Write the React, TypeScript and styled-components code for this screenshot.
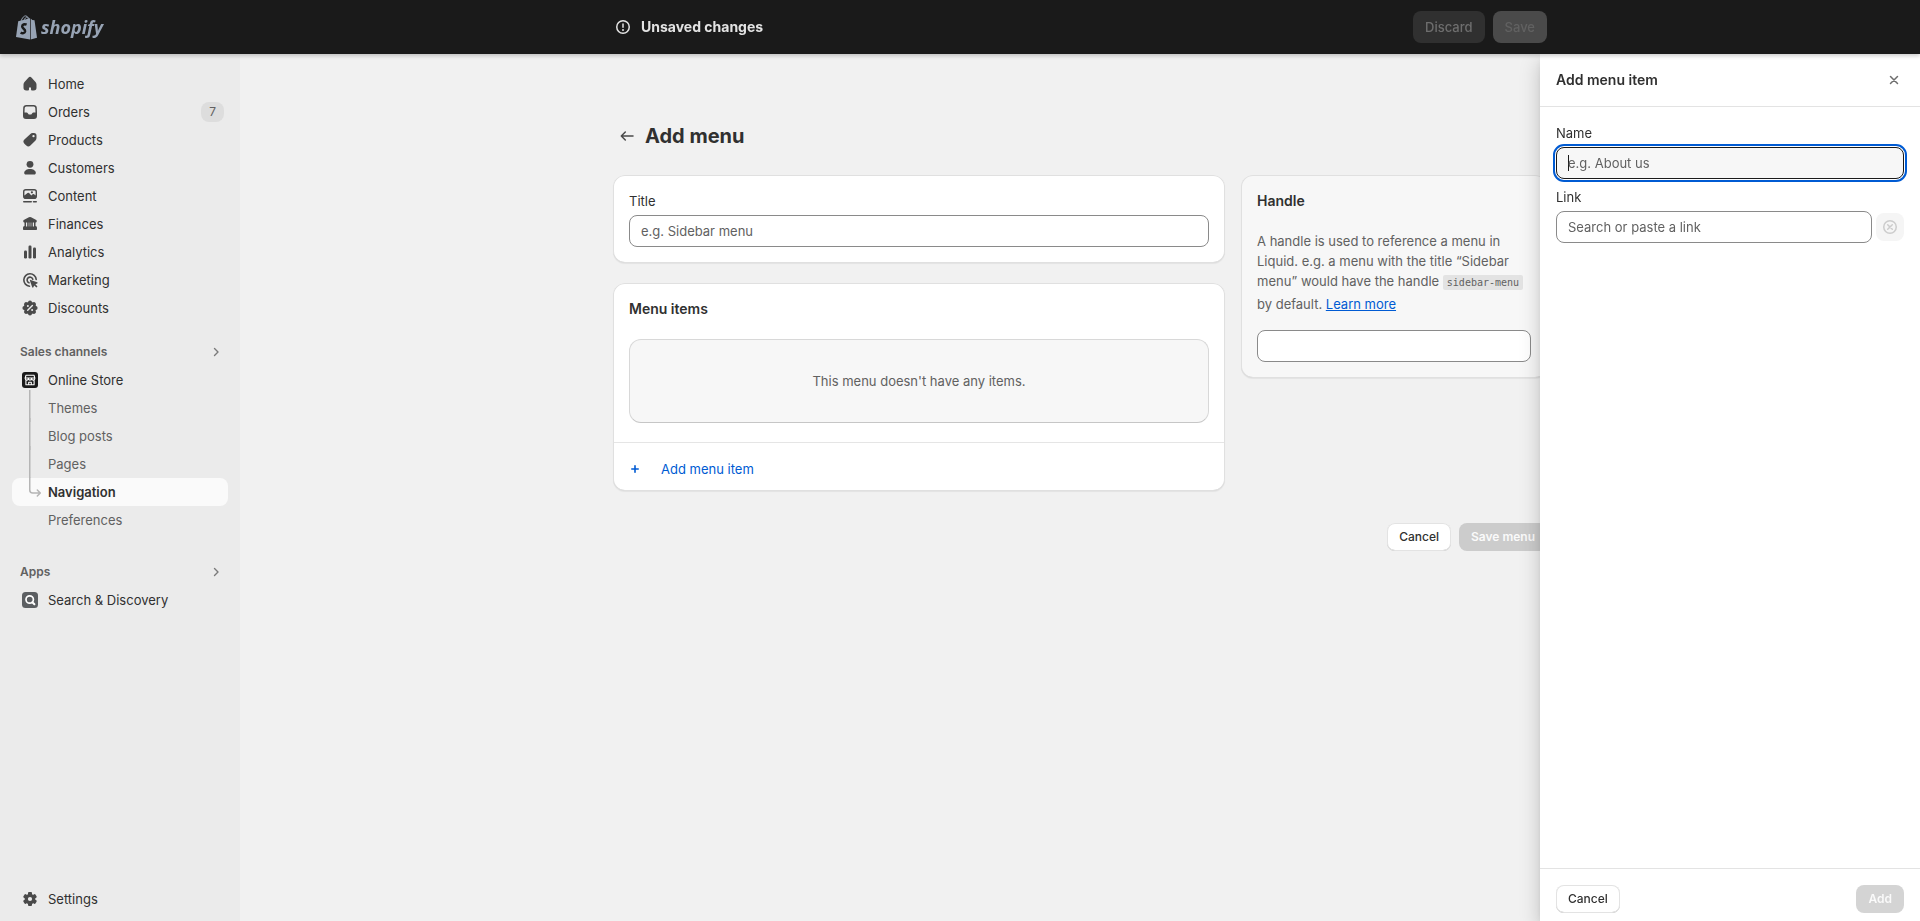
import React from 'react';
import styled, { createGlobalStyle, css } from 'styled-components';

const GlobalStyle = createGlobalStyle`
  *, *::before, *::after { box-sizing: border-box; }
  body {
    margin: 0;
    background: #f1f1f1;
    color: #303030;
    font-family: Inter, 'Liberation Sans', sans-serif;
    font-size: 13px;
    font-weight: 400;
    line-height: 20px;
  }
  h1, h2, p, ul { margin: 0; padding: 0; }
  ul { list-style: none; }
  button, input { font: inherit; color: inherit; }
`;

const Shell = styled.div`
  display: flex;
  flex-direction: column;
  min-height: 100vh;
`;

const TopBar = styled.header`
  position: sticky;
  top: 0;
  z-index: 3;
  display: flex;
  align-items: center;
  height: 54px;
  background: #1a1a1a;
  box-shadow: 0 2px 4px rgba(0, 0, 0, 0.2);
`;

const Brand = styled.a`
  display: flex;
  flex: none;
  align-items: center;
  gap: 4px;
  width: 240px;
  padding-left: 16px;
  color: #97a3b4;
  font: italic 700 18px/24px 'Open Sans', sans-serif;
  text-decoration: none;
`;

const BarContent = styled.div`
  flex: 1;
  display: flex;
  justify-content: center;
`;

const SaveBar = styled.div`
  display: flex;
  align-items: center;
  gap: 8px;
  width: 934px;
  color: #e3e3e3;
`;

const SaveMessage = styled.p`
  display: flex;
  flex: 1;
  align-items: center;
  gap: 8px;
  font-size: 14px;
  font-weight: 700;
`;

const BarButton = styled.button<{ $strong?: boolean }>`
  height: 32px;
  padding: 0 12px;
  border: 0;
  border-radius: 8px;
  background: ${(p) => (p.$strong ? '#4a4a4a' : '#303030')};
  color: ${(p) => (p.$strong ? '#616161' : '#6e6e6e')};
  font-weight: 500;
`;

const Body = styled.div`
  display: flex;
  flex: 1;
`;

const Sidebar = styled.nav`
  display: flex;
  flex: none;
  flex-direction: column;
  width: 240px;
  padding: 16px 12px 8px;
  background: #ebebeb;
`;

const NavLink = styled.a<{ $sub?: boolean; $current?: boolean }>`
  display: flex;
  align-items: center;
  gap: 8px;
  height: 28px;
  padding: 0 4px 0 8px;
  border-radius: 8px;
  text-decoration: none;
  color: ${(p) => (p.$sub && !p.$current ? '#616161' : '#303030')};
  ${(p) => p.$current && css`
    background: #fafafa;
    font-weight: 600;
  `}
`;

const NavText = styled.span`
  flex: 1;
`;

const IconSlot = styled.svg`
  flex: none;
  display: block;
  overflow: visible;
`;

const Badge = styled.span`
  padding: 0 8px;
  border-radius: 8px;
  background: #dddddd;
  color: #616161;
  font-size: 12px;
`;

const NavHeading = styled.button`
  display: flex;
  align-items: center;
  justify-content: space-between;
  width: 100%;
  height: 28px;
  margin-top: 16px;
  padding: 0 2px 0 8px;
  border: 0;
  background: none;
  color: #616161;
  font-size: 12px;
  font-weight: 600;
`;

const NavGroup = styled.ul<{ $after?: boolean }>`
  padding-bottom: ${(p) => (p.$after ? '8px' : '0')};
`;

const NavSpacer = styled.div`
  flex: 1;
`;

const Main = styled.main`
  display: flex;
  flex: 1;
  justify-content: center;
`;

const Page = styled.div`
  width: 934px;
  padding-top: 68px;
`;

const PageHeader = styled.div`
  display: flex;
  align-items: center;
  gap: 8px;
  height: 28px;
  padding-left: 4px;
`;

const PageTitle = styled.h1`
  font-size: 20px;
  font-weight: 700;
  line-height: 28px;
`;

const IconButton = styled.button<{ $filled?: boolean }>`
  display: grid;
  place-items: center;
  flex: none;
  width: ${(p) => (p.$filled ? '28px' : '20px')};
  height: ${(p) => (p.$filled ? '28px' : '20px')};
  padding: 0;
  border: 0;
  border-radius: 8px;
  background: ${(p) => (p.$filled ? '#f5f5f5' : 'none')};
`;

const Columns = styled.div`
  display: grid;
  grid-template-columns: 2fr 1fr;
  align-items: start;
  gap: 16px;
  margin-top: 25px;
`;

const Stack = styled.div`
  display: grid;
  gap: 20px;
`;

const Card = styled.section<{ $subdued?: boolean }>`
  border-radius: 12px;
  background: ${(p) => (p.$subdued ? '#f7f7f7' : '#ffffff')};
  box-shadow: inset 0 0 0 1px #e0e0e0, inset 0 -1px 0 #cccccc, 0 1px 1px rgba(0, 0, 0, 0.06);
`;

const CardSection = styled.div`
  padding: 16px;
`;

const MenuSection = styled(CardSection)`
  padding-bottom: 19px;
`;

const SectionTitle = styled.h2`
  font-size: 14px;
  font-weight: 600;
`;

const EmptyState = styled.p`
  display: grid;
  place-items: center;
  height: 84px;
  margin-top: 20px;
  border: 1px solid #d8d8d8;
  border-bottom-color: #c6c6c6;
  border-radius: 12px;
  background: #f7f7f7;
  color: #616161;
`;

const CardFooter = styled.div`
  margin: 0 1px;
  padding: 16px 15px 12px;
  border-top: 1px solid #e5e5e5;
`;

const AddItem = styled.button`
  display: flex;
  align-items: center;
  gap: 20px;
  padding: 0;
  border: 0;
  background: none;
  color: #005bd3;
`;

const Field = styled.div`
  display: grid;
  gap: 4px;
`;

const Label = styled.label`
  color: #303030;
`;

const TextInput = styled.input<{ $active?: boolean }>`
  width: 100%;
  min-width: 0;
  height: 32px;
  padding: 0 11px;
  border: 1px solid #8a8a8a;
  border-radius: 8px;
  background: #ffffff;
  outline: none;
  &::placeholder {
    color: #616161;
    opacity: 1;
  }
  ${(p) => p.$active && css`
    border-color: #1a1a1a;
    background: linear-gradient(#1a1a1a, #1a1a1a) 11px 7px / 1px 16px no-repeat #f7f7f7;
    outline: 2px solid #005bd3;
    outline-offset: 1px;
  `}
`;

const HandleText = styled.p`
  margin: 20px 0 16px;
  color: #616161;
`;

const Code = styled.code`
  padding: 2px 4px;
  border-radius: 2px;
  background: #e3e3e3;
  font: 10px/22px 'DejaVu Sans Mono', monospace;
`;

const TextLink = styled.a`
  color: #005bd3;
`;

const PageActions = styled.div`
  display: flex;
  justify-content: flex-end;
  gap: 8px;
  margin-top: 32px;
`;

const Button = styled.button<{ $tone?: string }>`
  height: 28px;
  padding: 0 12px;
  border: 0;
  border-radius: 8px;
  font-size: 12px;
  font-weight: 500;
  background: #ffffff;
  box-shadow: inset 0 0 0 1px #e3e3e3, inset 0 -1px 0 #b5b5b5;
  ${(p) => p.$tone && css`
    background: ${p.$tone};
    box-shadow: none;
    color: #fafafa;
    font-weight: 600;
  `}
`;

const Drawer = styled.aside`
  position: fixed;
  top: 54px;
  right: 0;
  bottom: 0;
  z-index: 2;
  display: flex;
  flex-direction: column;
  width: 380px;
  background: #ffffff;
  box-shadow: 0 8px 20px rgba(0, 0, 0, 0.2), 0 4px 8px -2px rgba(0, 0, 0, 0.1);
`;

const DrawerHeader = styled.div`
  display: flex;
  align-items: center;
  justify-content: space-between;
  height: 53px;
  padding: 0 16px;
  border-bottom: 1px solid #e3e3e3;
`;

const DrawerBody = styled.div`
  display: grid;
  align-content: start;
  gap: 8px;
  flex: 1;
  padding: 16px;
`;

const LinkRow = styled.div`
  display: flex;
  align-items: center;
  gap: 4px;
`;

const DrawerFooter = styled.div`
  display: flex;
  justify-content: space-between;
  padding: 16px 16px 8px;
  border-top: 1px solid #e3e3e3;
`;

function Icon({ children, color = '#4a4a4a' }: { children: React.ReactNode; color?: string }) {
  return (
    <IconSlot width="20" height="20" viewBox="0 0 20 20" fill={color} aria-hidden="true">
      {children}
    </IconSlot>
  );
}

const stroke = (color: string, width: number) => ({
  fill: 'none',
  stroke: color,
  strokeWidth: width,
  strokeLinecap: 'round' as const,
  strokeLinejoin: 'round' as const,
});

const icons = {
  home: (
    <path d="M8.344 3.692a2.25 2.25 0 0 1 3.312 0l3.854 4.19a3.75 3.75 0 0 1 .99 2.538v3.33a2.75 2.75 0 0 1-2.75 2.75h-1.75a1 1 0 0 1-1-1v-2h-2v2a1 1 0 0 1-1 1h-1.75a2.75 2.75 0 0 1-2.75-2.75v-3.33c0-.94.353-1.846.99-2.539l3.854-4.189Z" />
  ),
  orders: (
    <path
      fillRule="evenodd"
      d="M6.25 3A3.1 3.1 0 0 0 3.2 5.8l-.2 5v3.2A3 3 0 0 0 6 17h8a3 3 0 0 0 3-3v-3.2l-.2-5A3.1 3.1 0 0 0 13.750 3Zm0 1.500h7.500a1.600 1.600 0 0 1 1.550 1.500l.2 4.500h-2.100a1.500 1.500 0 0 0-1.200.7l-.5.7a1.500 1.500 0 0 1-1.200.6h-1a1.500 1.500 0 0 1-1.200-.6l-.5-.7a1.500 1.500 0 0 0-1.200-.7H4.500l.2-4.500a1.600 1.600 0 0 1 1.550-1.500Z"
    />
  ),
  products: (
    <path
      fillRule="evenodd"
      d="M10.400 3.900A3 3 0 0 1 12.500 3h1.500A2.500 2.500 0 0 1 16.500 5.500v2.400a3.500 3.500 0 0 1-1 2.500l-5.100 5.200a2.900 2.900 0 0 1-4.100 0l-1.900-1.900a2.900 2.900 0 0 1 0-4.100ZM13.500 7.300a1.150 1.150 0 1 0 0-2.300 1.150 1.150 0 0 0 0 2.300Z"
    />
  ),
  customers: (
    <>
      <circle cx="10" cy="6.300" r="3.400" />
      <path d="M4.200 15c0-2.500 2.800-4 5.800-4s5.800 1.500 5.800 4c0 .9-.6 1.500-1.400 1.500H5.600c-.8 0-1.400-.6-1.400-1.500Z" />
    </>
  ),
  content: (
    <>
      <path
        fillRule="evenodd"
        d="M5.800 3A2.800 2.800 0 0 0 3 5.800v4.400A2.800 2.800 0 0 0 5.800 13h8.400A2.800 2.800 0 0 0 17 10.200V5.800A2.800 2.800 0 0 0 14.200 3Zm0 1.400h8.400a1.400 1.400 0 0 1 1.400 1.400v3.700l-1.500-1.300a1.100 1.100 0 0 0-1.500.1l-1.300 1.200-2.200-2.400a1.200 1.200 0 0 0-1.600 0L4.400 9.500V5.800a1.400 1.400 0 0 1 1.400-1.400Z"
      />
      <circle cx="11.900" cy="6.300" r="1.100" />
      <path d="M3.750 14.900h7.500a.75.75 0 0 1 0 1.500h-7.500a.75.75 0 0 1 0-1.500ZM13.500 14.900h2.750a.75.75 0 0 1 0 1.500H13.500a.75.75 0 0 1 0-1.500Z" />
    </>
  ),
  finances: (
    <path
      fillRule="evenodd"
      d="M8.900 3.300a2.400 2.400 0 0 1 2.200 0l4.700 2.400c.8.400 1.100 1 .9 1.700-.1.600-.6 1-1.200 1v3.700a1.700 1.700 0 0 1 1.500 1.700v1.300c0 .6-.4 1-.9 1H3.900c-.5 0-.9-.4-.9-1v-1.300a1.700 1.700 0 0 1 1.500-1.700V8.400c-.6 0-1.100-.4-1.200-1-.2-.7.1-1.300.9-1.700ZM6 8.600v3.900h1.200V8.600Zm2.700 0v3.900h.6V8.600Zm2 0v3.900h.6V8.600Zm2.100 0v3.900H14V8.600Z"
    />
  ),
  analytics: (
    <>
      <rect x="4" y="8.500" width="3" height="8" rx="1.200" />
      <rect x="8.500" y="3.500" width="3" height="13" rx="1.200" />
      <rect x="13" y="5.500" width="3" height="11" rx="1.200" />
    </>
  ),
  marketing: (
    <>
      <path d="M16.200 9.500A6.200 6.200 0 1 0 9.500 16.200" {...stroke('#4a4a4a', 1.6)} />
      <path d="M12.800 9.300A2.900 2.900 0 1 0 9 12.800" {...stroke('#4a4a4a', 1.6)} />
      <path d="M10.600 9.900l6.600 2.300c.6.200.6 1 0 1.200l-1.800.8 1.700 1.700a.8.8 0 0 1-1.200 1.200l-1.700-1.700-.8 1.800c-.2.600-1 .6-1.200 0L9.900 10.600a.6.600 0 0 1 .7-.7Z" />
    </>
  ),
  discounts: (
    <>
      <circle cx="10" cy="10" r="6.200" />
      {[0, 45, 90, 135, 180, 225, 270, 315].map((angle) => (
        <circle key={angle} cx="10" cy="4.400" r="2" transform={`rotate(${angle} 10 10)`} />
      ))}
      <path d="M7.700 12.300l4.700-4.700" {...stroke('#ebebeb', 1.4)} />
      <circle cx="7.900" cy="8" r="1" fill="#ebebeb" />
      <circle cx="12.100" cy="12" r="1" fill="#ebebeb" />
    </>
  ),
  store: (
    <>
      <rect x="2" y="2" width="16" height="16" rx="3" fill="#1a1a1a" />
      <path
        d="M5.200 8l.8-2.800h8L14.800 8M5.200 8v.5a1.600 1.600 0 0 0 3.200 0 1.600 1.600 0 0 0 3.200 0 1.600 1.600 0 0 0 3.200 0V8ZM5.900 10.500v4.300h8.200v-4.300M8.700 14.600v-2.300h2.600v2.300"
        {...stroke('#ffffff', 1.1)}
      />
    </>
  ),
  search: (
    <>
      <rect x="2" y="2" width="16" height="16" rx="3.500" fill="#5c5f62" />
      <circle cx="9.700" cy="9.500" r="3.700" {...stroke('#ffffff', 1.7)} />
      <path d="M12.300 12.200l2.100 2.100" {...stroke('#ffffff', 2)} />
    </>
  ),
  settings: (
    <>
      <circle cx="10" cy="10" r="3.700" {...stroke('#4a4a4a', 3.2)} />
      {[0, 60, 120, 180, 240, 300].map((angle) => (
        <rect key={angle} x="8" y="3" width="4" height="4" rx="1" transform={`rotate(${angle} 10 10)`} />
      ))}
    </>
  ),
};

const mainLinks: { label: string; icon: keyof typeof icons; count?: number }[] = [
  { label: 'Home', icon: 'home' },
  { label: 'Orders', icon: 'orders', count: 7 },
  { label: 'Products', icon: 'products' },
  { label: 'Customers', icon: 'customers' },
  { label: 'Content', icon: 'content' },
  { label: 'Finances', icon: 'finances' },
  { label: 'Analytics', icon: 'analytics' },
  { label: 'Marketing', icon: 'marketing' },
  { label: 'Discounts', icon: 'discounts' },
];

const storeLinks: { label: string; branch: 'line' | 'arrow' | 'none' }[] = [
  { label: 'Themes', branch: 'line' },
  { label: 'Blog posts', branch: 'line' },
  { label: 'Pages', branch: 'line' },
  { label: 'Navigation', branch: 'arrow' },
  { label: 'Preferences', branch: 'none' },
];

function Branch({ kind }: { kind: 'line' | 'arrow' | 'none' }) {
  return (
    <IconSlot width="20" height="28" viewBox="0 0 20 28" aria-hidden="true">
      {kind === 'line' && <path d="M9.750 -4V28" fill="none" stroke="#b5b5b5" strokeWidth="1.500" />}
      {kind === 'arrow' && (
        <path d="M9.750 0V12a3 3 0 0 0 3 3H20M17.300 12l3 3-3 3" {...stroke('#b5b5b5', 1.5)} />
      )}
    </IconSlot>
  );
}

function NavItem({ label, icon, count }: { label: string; icon: keyof typeof icons; count?: number }) {
  return (
    <li>
      <NavLink href="#">
        <Icon>{icons[icon]}</Icon>
        <NavText>{label}</NavText>
        {count !== undefined && <Badge>{count}</Badge>}
      </NavLink>
    </li>
  );
}

function SectionHeading({ label }: { label: string }) {
  return (
    <NavHeading type="button">
      {label}
      <Icon>
        <path d="M8.500 6.500L12 10l-3.500 3.500" {...stroke('#7a7a7a', 1.4)} />
      </Icon>
    </NavHeading>
  );
}

function BagLogo() {
  return (
    <IconSlot width="21" height="25" viewBox="0 0 21 25" aria-hidden="true">
      <path d="M2.200 6.200L14 3.300V24.500L0 22Z" fill="#97a3b4" />
      <path d="M14.700 3.500L16.300 5 18.500 5.300 21 22.700 14.700 24.400Z" fill="#97a3b4" />
      <path
        d="M5 6.500C6 2.500 8.300.7 9.800.9c1.800.2 2.600 2.300 2.600 4.100M7.800 5.800C8.600 3.200 10.300 1.800 11.600 2.200c1 .4 1.500 1.400 1.700 2.400"
        {...stroke('#97a3b4', 1)}
      />
      <path
        d="M10.600 9.700C8.400 8.700 6.200 9.600 6.200 11.500c0 2.200 3.200 2.500 2.900 4.900-.3 2-2.700 2.300-4.400 1"
        fill="none"
        stroke="#1a1a1a"
        strokeWidth="2.500"
      />
    </IconSlot>
  );
}

export default function App() {
  return (
    <Shell>
      <GlobalStyle />
      <TopBar>
        <Brand href="#">
          <BagLogo />
          shopify
        </Brand>
        <BarContent>
          <SaveBar>
            <SaveMessage>
              <Icon>
                <circle cx="10" cy="10" r="6.250" {...stroke('#e3e3e3', 1.5)} />
                <path d="M10 7v3.300" {...stroke('#e3e3e3', 1.5)} />
                <circle cx="10" cy="13" r="1" fill="#e3e3e3" />
              </Icon>
              Unsaved changes
            </SaveMessage>
            <BarButton type="button">Discard</BarButton>
            <BarButton type="button" $strong>Save</BarButton>
          </SaveBar>
        </BarContent>
      </TopBar>

      <Body>
        <Sidebar aria-label="Main">
          <NavGroup>
            {mainLinks.map((l) => <NavItem key={l.label} {...l} />)}
          </NavGroup>
          <SectionHeading label="Sales channels" />
          <NavGroup $after>
            <NavItem label="Online Store" icon="store" />
            {storeLinks.map((l) => (
              <li key={l.label}>
                <NavLink href="#" $sub $current={l.branch === 'arrow'}>
                  <Branch kind={l.branch} />
                  <NavText>{l.label}</NavText>
                </NavLink>
              </li>
            ))}
          </NavGroup>
          <SectionHeading label="Apps" />
          <NavGroup>
            <NavItem label="Search &amp; Discovery" icon="search" />
          </NavGroup>
          <NavSpacer />
          <NavGroup>
            <NavItem label="Settings" icon="settings" />
          </NavGroup>
        </Sidebar>

        <Main>
          <Page>
            <PageHeader>
              <IconButton type="button" aria-label="Back">
                <Icon>
                  <path d="M16 10H4.500M8.300 6L4.300 10l4 4" {...stroke('#4a4a4a', 1.5)} />
                </Icon>
              </IconButton>
              <PageTitle>Add menu</PageTitle>
            </PageHeader>

            <Columns>
              <Stack>
                <Card>
                  <CardSection>
                    <Field>
                      <Label htmlFor="menu-title">Title</Label>
                      <TextInput id="menu-title" placeholder="e.g. Sidebar menu" />
                    </Field>
                  </CardSection>
                </Card>
                <Card>
                  <MenuSection>
                    <SectionTitle>Menu items</SectionTitle>
                    <EmptyState>This menu doesn't have any items.</EmptyState>
                  </MenuSection>
                  <CardFooter>
                    <AddItem type="button">
                      <IconSlot width="12" height="12" viewBox="0 0 12 12" aria-hidden="true">
                        <path d="M6 2.800v6.400M2.800 6h6.400" {...stroke('#005bd3', 1.6)} />
                      </IconSlot>
                      Add menu item
                    </AddItem>
                  </CardFooter>
                </Card>
              </Stack>
              <Card $subdued>
                <CardSection>
                  <SectionTitle id="handle-title">Handle</SectionTitle>
                  <HandleText>
                    A handle is used to reference a menu in Liquid. e.g. a menu with the title “Sidebar menu” would
                    have the handle <Code>sidebar-menu</Code> by default. <TextLink href="#">Learn more</TextLink>
                  </HandleText>
                  <TextInput aria-labelledby="handle-title" />
                </CardSection>
              </Card>
            </Columns>

            <PageActions>
              <Button type="button">Cancel</Button>
              <Button type="button" $tone="#cccccc">Save menu</Button>
            </PageActions>
          </Page>
        </Main>
      </Body>

      <Drawer aria-label="Add menu item">
        <DrawerHeader>
          <SectionTitle>Add menu item</SectionTitle>
          <IconButton type="button" aria-label="Close">
            <Icon>
              <path d="M6.500 6.500l7 7M13.500 6.500l-7 7" {...stroke('#6e6e6e', 1.5)} />
            </Icon>
          </IconButton>
        </DrawerHeader>
        <DrawerBody>
          <Field>
            <Label htmlFor="item-name">Name</Label>
            <TextInput id="item-name" placeholder="e.g. About us" $active />
          </Field>
          <Field>
            <Label htmlFor="item-link">Link</Label>
            <LinkRow>
              <TextInput id="item-link" placeholder="Search or paste a link" />
              <IconButton type="button" aria-label="Clear link" $filled>
                <Icon>
                  <circle cx="10" cy="10" r="6.250" {...stroke('#cccccc', 1.5)} />
                  <path d="M7.700 7.700l4.600 4.600M12.300 7.700l-4.600 4.600" {...stroke('#cccccc', 1.5)} />
                </Icon>
              </IconButton>
            </LinkRow>
          </Field>
        </DrawerBody>
        <DrawerFooter>
          <Button type="button">Cancel</Button>
          <Button type="button" $tone="#d4d4d4">Add</Button>
        </DrawerFooter>
      </Drawer>
    </Shell>
  );
}
